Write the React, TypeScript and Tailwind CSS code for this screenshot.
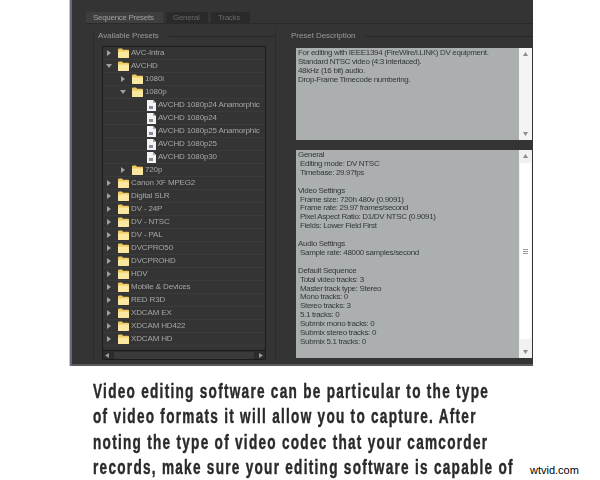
import { ReactNode } from 'react';

const ROW = 'h-[13px] flex items-center border-b border-[#3b3b3b]';

function Arrow({ open }: { open?: boolean }) {
  return (
    <svg className="w-[6px] h-[6px] shrink-0" viewBox="0 0 6 6">
      <path d={open ? 'M0 1h6L3 5z' : 'M1 0l4 3-4 3z'} fill="#a0a0a0" />
    </svg>
  );
}

function Folder() {
  return (
    <svg className="w-[11px] h-[10px] shrink-0" viewBox="0 0 11 10">
      <path d="M0 1.5C0 1 .4.6 1 .6h3l1 1.2h5c.6 0 1 .4 1 1V9c0 .5-.4 1-1 1H1c-.6 0-1-.5-1-1z" fill="#eecb62" />
      <path d="M0 3.6h11V9c0 .5-.4 1-1 1H1c-.6 0-1-.5-1-1z" fill="#fbe8a0" />
    </svg>
  );
}

function PresetFile() {
  return (
    <svg className="w-[9px] h-[11px] shrink-0" viewBox="0 0 9 11">
      <path d="M0 0h6l3 3v8H0z" fill="#f2f2f2" />
      <path d="M6 0l3 3H6z" fill="#a9a9a9" />
      <rect x="2" y="6" width="4" height="3" fill="#8a8a9a" />
    </svg>
  );
}

function FolderRow({ label, indent, open }: { label: string; indent?: boolean; open?: boolean }) {
  return (
    <div className={`${ROW} ${indent ? 'pl-[17px]' : 'pl-[3px]'}`}>
      <Arrow open={open} />
      <div className="ml-[6px]">
        <Folder />
      </div>
      <span className="ml-[2px]">{label}</span>
    </div>
  );
}

function FileRow({ label }: { label: string }) {
  return (
    <div className={`${ROW} pl-[44px]`}>
      <PresetFile />
      <span className="ml-[2px] whitespace-nowrap">{label}</span>
    </div>
  );
}

function Legend({ children, line }: { children: ReactNode; line: string }) {
  return (
    <div className="flex items-center h-[12px] text-[#9a9a9a] text-[8px] tracking-[-0.05px] whitespace-nowrap">
      <span>{children}</span>
      <div className={`${line} ml-[10px] h-px bg-[#252525]`} />
    </div>
  );
}

function ScrollArrow({ up }: { up?: boolean }) {
  return (
    <svg className="w-[5px] h-[4px]" viewBox="0 0 5 4">
      <path d={up ? 'M2.5 0L5 4H0z' : 'M0 0h5L2.5 4z'} fill="#8c8c8c" />
    </svg>
  );
}

const folders = ['Digital SLR', 'DV - 24P', 'DV - NTSC', 'DV - PAL', 'DVCPRO50', 'DVCPROHD', 'HDV', 'Mobile & Devices', 'RED R3D', 'XDCAM EX', 'XDCAM HD422', 'XDCAM HD'];

const summary = [
  ['Video Settings', 'Frame size: 720h 480v (0.9091)', 'Frame rate: 29.97 frames/second', 'Pixel Aspect Ratio: D1/DV NTSC (0.9091)', 'Fields: Lower Field First'],
  ['Audio Settings', 'Sample rate: 48000 samples/second'],
  ['Default Sequence', 'Total video tracks: 3', 'Master track type: Stereo', 'Mono tracks: 0', 'Stereo tracks: 3', '5.1 tracks: 0', 'Submix mono tracks: 0', 'Submix stereo tracks: 0', 'Submix 5.1 tracks: 0'],
];

function Block({ lines }: { lines: string[] }) {
  return (
    <div className="mb-[8.9px]">
      <div>{lines[0]}</div>
      {lines.slice(1).map((l) => (
        <div key={l} className="pl-[2px]">{l}</div>
      ))}
    </div>
  );
}

export default function App() {
  return (
    <div className="w-[600px] h-[480px] bg-white relative overflow-hidden font-['Liberation_Sans',sans-serif]">
      <div className="flex h-[366px]">
        <div className="w-[69px]" />
        <div className="w-px bg-[#c9c6d4]" />
        <div className="w-[2px] bg-[#6b6678]" />
        {/* app window */}
        <div className="w-[461px] bg-[#343434] border-b-2 border-[#5a5a5a] pt-[12px] pl-[14px] blur-[0.4px]">
          <div className="flex h-[12px] text-[8px] tracking-[-0.3px] border-b border-[#2a2a2a] whitespace-nowrap">
            <div className="w-[77px] bg-[#3e3e3e] text-[#a0a0a0] pl-[7px] flex items-center">Sequence Presets</div>
            <div className="w-[42px] ml-[3px] bg-[#2a2a2a] text-[#686868] pl-[7px] flex items-center">General</div>
            <div className="w-[39px] ml-[3px] bg-[#2a2a2a] text-[#686868] pl-[7px] flex items-center">Tracks</div>
          </div>
          <div className="flex mt-[6px]">
            {/* left group */}
            <div className="w-[183px] ml-[7px] pl-[4px] border-x border-[#2b2b2b] h-[329px]">
              <Legend line="w-[105px]">Available Presets</Legend>
              <div className="ml-[4px] mt-[4px] w-[164px] h-[314px] border border-[#1c1c1c] flex flex-col text-[8px] tracking-[-0.15px] text-[#a6a6a6]">
                <div className="flex-1 overflow-hidden">
                  <FolderRow label="AVC-Intra" />
                  <FolderRow label="AVCHD" open />
                  <FolderRow label="1080i" indent />
                  <FolderRow label="1080p" indent open />
                  <FileRow label="AVCHD 1080p24 Anamorphic" />
                  <FileRow label="AVCHD 1080p24" />
                  <FileRow label="AVCHD 1080p25 Anamorphic" />
                  <FileRow label="AVCHD 1080p25" />
                  <FileRow label="AVCHD 1080p30" />
                  <FolderRow label="720p" indent />
                  <FolderRow label="Canon XF MPEG2" />
                  {folders.map((f) => (
                    <FolderRow key={f} label={f} />
                  ))}
                </div>
                <div className="h-[9px] bg-[#2c2c2c] flex items-center justify-between px-[2px] border-t border-[#1c1c1c]">
                  <svg className="w-[4px] h-[5px]" viewBox="0 0 4 5"><path d="M4 0v5L0 2.5z" fill="#999" /></svg>
                  <div className="w-[140px] h-[7px] bg-[#3a3a3a]" />
                  <svg className="w-[4px] h-[5px]" viewBox="0 0 4 5"><path d="M0 0v5l4-2.5z" fill="#999" /></svg>
                </div>
              </div>
            </div>
            {/* right group */}
            <div className="w-[241px] ml-[15px]">
              <Legend line="flex-1">Preset Description</Legend>
              <div className="ml-[5px] mt-[6px] text-[8px] leading-[8.9px] tracking-[-0.33px] text-[#33373a]">
                <div className="h-[92px] bg-[#abafaf] flex">
                  <div className="flex-1 px-[2px] pt-[1px]">
                    <div>For editing with IEEE1394 (FireWire/i.LINK) DV equipment.</div>
                    <div>Standard NTSC video (4:3 interlaced).</div>
                    <div>48kHz (16 bit) audio.</div>
                    <div>Drop-Frame Timecode numbering.</div>
                  </div>
                  <div className="w-[13px] bg-[#f4f4f4] flex flex-col items-center justify-between py-[4px]">
                    <ScrollArrow up />
                    <ScrollArrow />
                  </div>
                </div>
                <div className="mt-[10px] h-[208px] bg-[#abafaf] flex">
                  <div className="flex-1 px-[2px] pt-[1px]">
                    <div className="mb-[8.9px]">
                      <div>General</div>
                      <div className="pl-[2px]">Editing mode: DV NTSC</div>
                      <div className="pl-[2px]">Timebase: 29.97fps</div>
                    </div>
                    {summary.map((b) => (
                      <Block key={b[0]} lines={b} />
                    ))}
                  </div>
                  <div className="w-[13px] bg-[#f1f1f1] flex flex-col items-center py-[4px]">
                    <ScrollArrow up />
                    <div className="mt-[5px] w-[11px] h-[176px] bg-white flex items-center justify-center">
                      <div className="w-[5px] h-[5px] border-y border-[#999] flex items-center">
                        <div className="w-full h-px bg-[#999]" />
                      </div>
                    </div>
                    <div className="mt-auto">
                      <ScrollArrow />
                    </div>
                  </div>
                </div>
              </div>
            </div>
          </div>
        </div>
      </div>
      {/* caption */}
      <div className="pl-[93px] pt-[13px] text-[#2a2a2a] font-bold text-[20px] leading-[25.3px] tracking-[1.87px] blur-[0.3px] [-webkit-text-stroke:0.45px_#2a2a2a]">
        {['Video editing software can be particular to the type', 'of video formats it will allow you to capture. After', 'noting the type of video codec that your camcorder', 'records, make sure your editing software is capable of'].map((l) => (
          <div key={l} className="w-[611px] whitespace-nowrap origin-left scale-x-[0.68]">{l}</div>
        ))}
      </div>
      <div className="absolute left-[530px] top-[464px] text-[11px] text-black leading-[13px]">wtvid.com</div>
    </div>
  );
}
